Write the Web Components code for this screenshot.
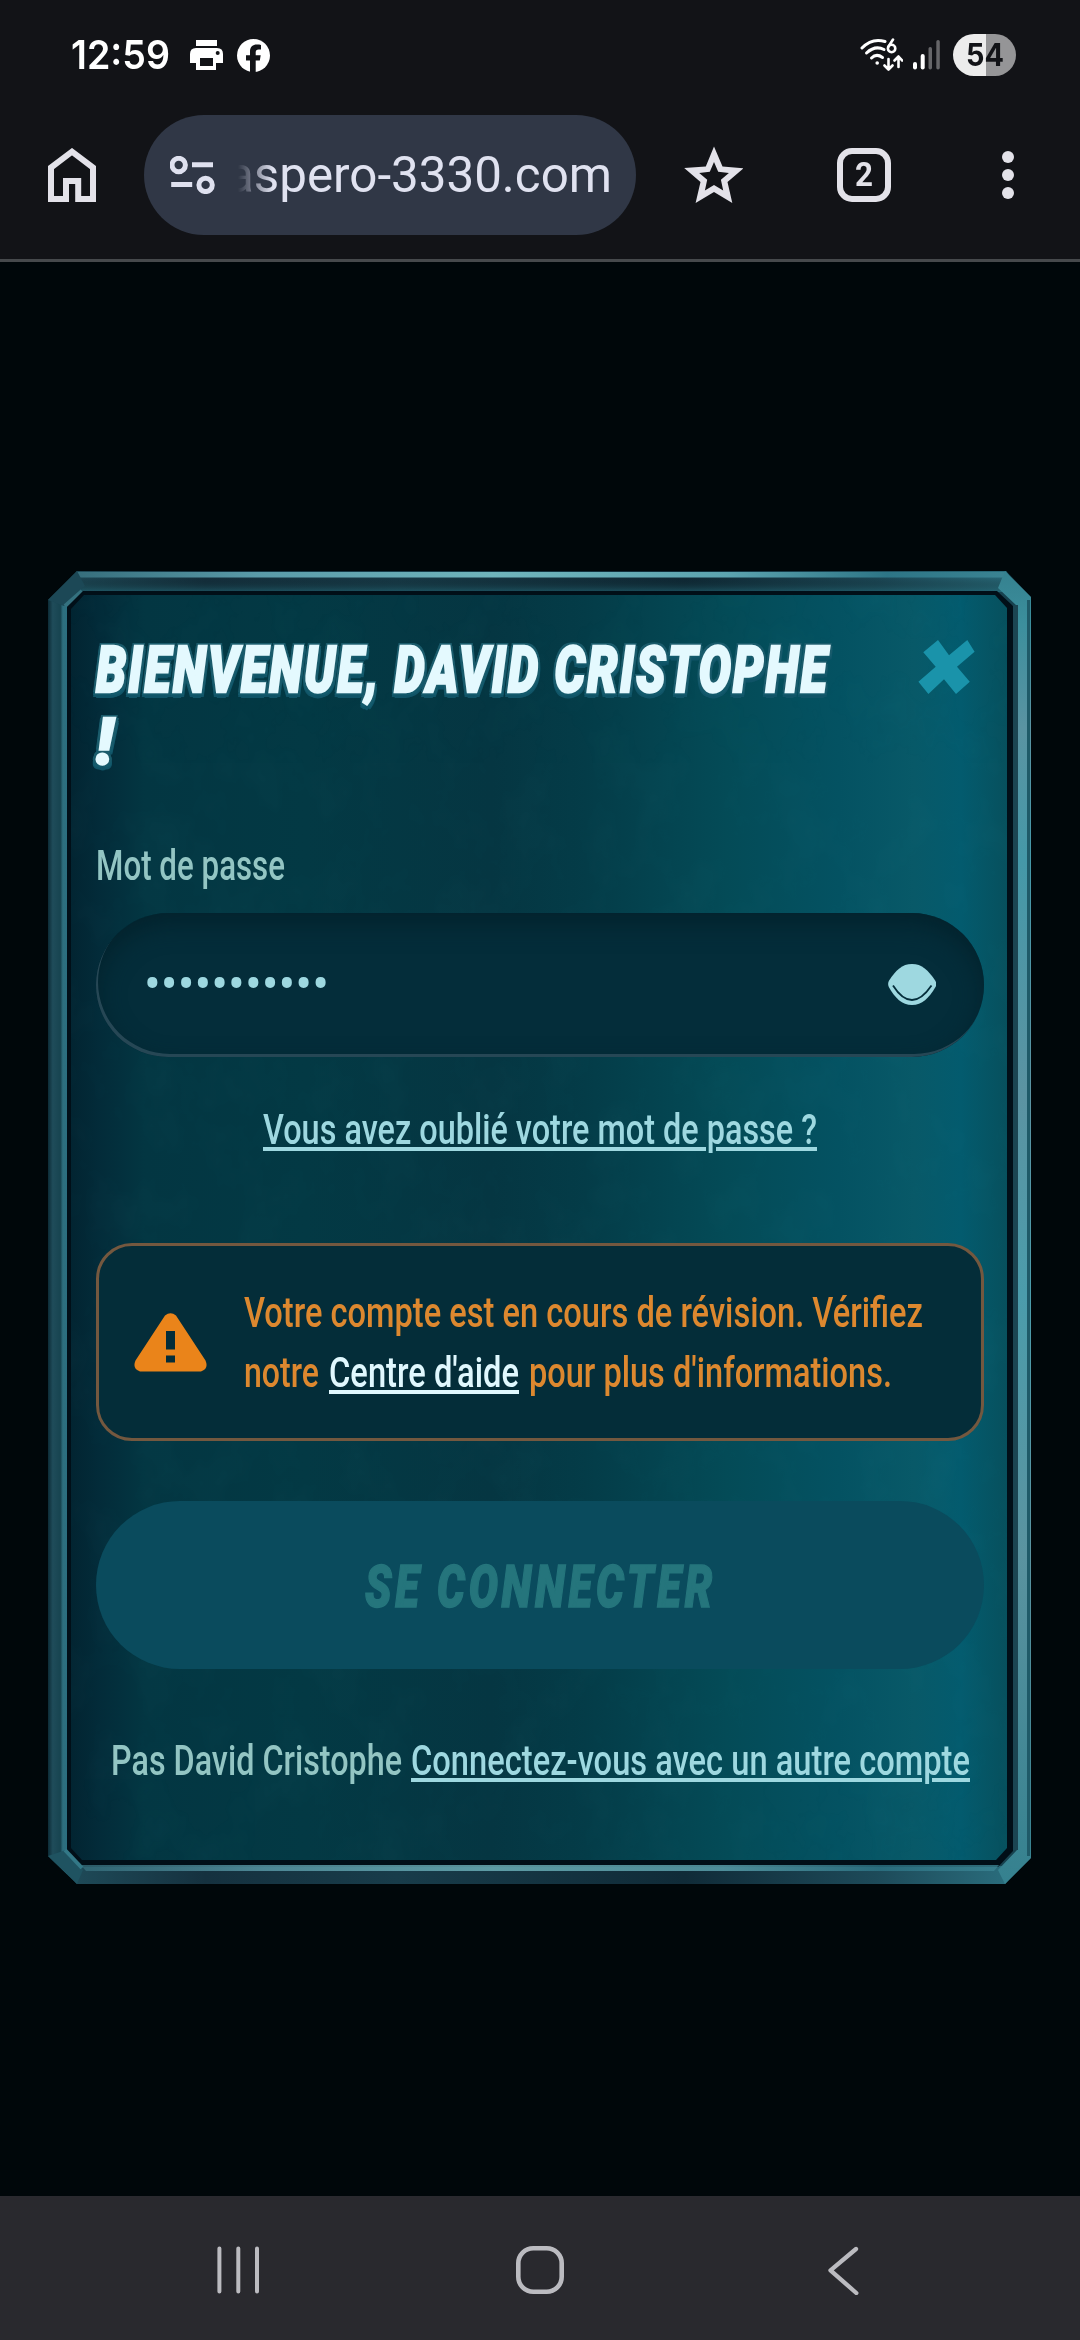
<!DOCTYPE html>
<html lang="fr">
<head>
<meta charset="utf-8">
<title>Connexion</title>
<style>
html,body{margin:0;padding:0;background:#00070a}
body{width:1080px;height:2340px;overflow:hidden;font-family:Roboto,"Liberation Sans",sans-serif}
</style>
</head>
<body>
<phone-screen></phone-screen>
<script>
const define=(name,html,extra)=>customElements.define(name,class extends HTMLElement{
  connectedCallback(){
    if(this.shadowRoot)return;
    const t=document.createElement('template');
    t.innerHTML=html;
    this.attachShadow({mode:'open'}).appendChild(t.content.cloneNode(true));
    if(extra)extra.call(this,this.shadowRoot);
  }
});

/* Text squeezed or stretched horizontally so that it takes exactly w pixels. */
define('fit-text',`<style>
:host{display:block;white-space:nowrap;flex:none}
span{display:inline-block;transform-origin:0 50%;white-space:pre}
</style><span><slot></slot></span>`,function(r){
  const s=r.querySelector('span'),w=+this.getAttribute('w');
  this.style.width=w+'px';
  s.style.transform='scaleX('+(w/s.getBoundingClientRect().width)+')';
});

define('status-bar',`<style>
:host{display:flex;align-items:center;height:110px;box-sizing:border-box;padding:0 64px 0 71px;color:#fff;font-family:Inter,sans-serif}
svg{display:block;flex:none}
.time{font-size:40px;font-weight:600;line-height:110px;margin-right:20px}
.gap{flex:1}
.bat{display:flex;align-items:center;justify-content:center;width:63px;height:42px;border-radius:21px;margin-left:12px;background:linear-gradient(90deg,#ececec 33px,#959597 33px);color:#121317;font-size:31px;font-weight:700;line-height:42px}
</style>
<fit-text class="time" w="99">12:59</fit-text>
<svg width="33" height="32" viewBox="190 40 33 32"><path fill="#fff" d="M196 41h21v6h-21zM196 49h21q6 0 6 6v9h-7v7h-20v-7h-6v-9q0-6 6-6z"/><path fill="#121317" d="M200 59h13v8h-13z"/><circle cx="217.700" cy="54" r="2" fill="#121317"/></svg>
<svg style="margin-left:14px" width="33" height="33" viewBox="0 0 33 33"><circle cx="16.500" cy="16.500" r="16.500" fill="#fff"/><path d="M13 33V21.500H9v-5.300h4v-3.700c0-4.500 2.700-7 7-7 1.500 0 3 .2 4 .4v4.600h-2.300c-2.200 0-3 1.300-3 2.800v2.900h5l-.9 5.300h-4.100V33z" fill="#121317"/></svg>
<div class="gap"></div>
<svg width="44" height="34" viewBox="860 39 44 34" fill="none" stroke="#fff" stroke-width="3" stroke-linecap="round" stroke-linejoin="round"><path d="M863 49Q873 38.500 886 42.500"/><path d="M867.500 54Q876 46 885 50.500"/><path d="M872.500 59Q877.500 54 883.500 58.500"/><circle cx="878.200" cy="64" r="1.800" fill="#fff" stroke="none"/><circle cx="892.600" cy="49.500" r="3.700" stroke-width="2.600"/><path d="M889.500 47.500L894 40.500" stroke-width="2.600"/><path d="M889.500 60v10M885.500 66.500l4 4 4-4M899.500 68v-10M895.500 61.500l4-4 3.600 4" stroke-width="2.600"/></svg>
<svg style="margin-left:10px" width="28" height="30" viewBox="914 40 28 30"><rect x="914" y="62" width="4" height="7.500" rx="2" fill="#fff"/><rect x="921.700" y="54" width="4" height="15.500" rx="2" fill="#fff"/><rect x="929.500" y="47" width="3.500" height="22.500" rx="1.700" fill="#666669"/><rect x="937.300" y="40" width="3.500" height="29.500" rx="1.700" fill="#666669"/></svg>
<div class="bat"><fit-text w="38">54</fit-text></div>`);

define('browser-bar',`<style>
:host{display:flex;align-items:center;height:120px;padding:0 0 0 48px;margin-top:5px}
svg{display:block;flex:none}
.pill{display:flex;flex:none;align-items:center;box-sizing:border-box;width:492px;height:120px;border-radius:60px;background:#303746;margin:0 48px;padding-left:26px}
.url{display:flex;flex:none;justify-content:flex-end;width:397px;font-size:49.500px;line-height:80px;color:#e0e2f0;-webkit-mask-image:linear-gradient(90deg,transparent 23px,#000 58px);mask-image:linear-gradient(90deg,transparent 23px,#000 58px)}
.tabs{display:flex;flex:none;align-items:center;justify-content:center;box-sizing:border-box;width:54px;height:54px;border:6px solid #e3e2e9;border-radius:15px;margin:0 111px 0 94px;color:#e3e2e9;font-size:33px;font-weight:700;line-height:42px}
</style>
<svg width="48" height="54" viewBox="48 148 48 54"><path d="M51 199V167.500L72 151.700L93 167.500V199H78.200V181H66V199Z" fill="none" stroke="#e3e2e9" stroke-width="6"/></svg>
<div class="pill">
<svg width="45" height="38" viewBox="170 156 45 38" fill="none" stroke="#dfe1ef" stroke-width="5"><circle cx="178.700" cy="165" r="6.700"/><path d="M192 164.700h21M171.200 184.600h21"/><circle cx="205.600" cy="184.900" r="6.700"/></svg>
<div class="url"><fit-text w="385">aspero-3330.com</fit-text></div></div>
<svg width="59" height="58" viewBox="684 145 59 58"><path fill="#e3e2e9" fill-rule="evenodd" d="M714 145.500L722.500 165.500L743.500 167.300L727.500 181L732.300 202L714 191L695.600 202L700.500 181L684.200 167L705.800 165.500ZM714 161L709.800 170.800L699.200 172L707.200 178.800L704.900 189.500L714 184L723.200 189.500L720.900 178.800L728.900 172L718.200 170.800Z"/></svg>
<div class="tabs"><fit-text w="18">2</fit-text></div>
<svg width="12" height="50" viewBox="0 0 12 50" fill="#e3e2e9"><circle cx="6" cy="7" r="6"/><circle cx="6" cy="25" r="6"/><circle cx="6" cy="43" r="6"/></svg>`);

/* Beveled metal frame with a textured teal interior. */
define('metal-panel',`<style>
:host{display:grid;width:983px;height:1313px}
svg,.in{grid-area:1/1;display:block}
.in{box-sizing:border-box;padding:61px 47px 0 48px;z-index:1}
</style>
<svg width="983" height="1313" viewBox="48 571 983 1313">
<defs>
<linearGradient id="bg" gradientUnits="userSpaceOnUse" x1="70" x2="1008" y1="0" y2="0"><stop offset="0" stop-color="#022431"/><stop offset=".03" stop-color="#032b39"/><stop offset=".08" stop-color="#033642"/><stop offset=".25" stop-color="#033944"/><stop offset=".45" stop-color="#053642"/><stop offset=".55" stop-color="#043c48"/><stop offset=".7" stop-color="#044b57"/><stop offset=".82" stop-color="#045262"/><stop offset=".9" stop-color="#085968"/><stop offset=".95" stop-color="#035b6e"/><stop offset="1" stop-color="#07505d"/></linearGradient>
<linearGradient id="tp" x1="0" x2="1" y1="0" y2="0"><stop offset="0" stop-color="#356d7b"/><stop offset=".2" stop-color="#5a9ba9"/><stop offset=".45" stop-color="#6fb4bc"/><stop offset=".7" stop-color="#5ca4b0"/><stop offset=".87" stop-color="#2d7586"/><stop offset="1" stop-color="#3b8493"/></linearGradient>
<linearGradient id="st" x1="0" x2="1" y1="0" y2="0"><stop offset="0" stop-color="#1f4c5a"/><stop offset=".15" stop-color="#15313f"/><stop offset=".35" stop-color="#183c4a"/><stop offset=".65" stop-color="#102b38"/><stop offset=".85" stop-color="#1d4a59"/><stop offset="1" stop-color="#2b7080"/></linearGradient>
<linearGradient id="sv" x1="0" x2="0" y1="0" y2="1"><stop offset="0" stop-color="#000" stop-opacity="0"/><stop offset="1" stop-color="#226472" stop-opacity=".65"/></linearGradient>
<linearGradient id="lf" x1="0" x2="1" y1="0" y2="0"><stop offset="0" stop-color="#0c2b36"/><stop offset=".25" stop-color="#1f4c5a"/><stop offset=".65" stop-color="#174450"/><stop offset=".78" stop-color="#2d6e7e"/><stop offset="1" stop-color="#2b6f80"/></linearGradient>
<linearGradient id="rt" x1="0" x2="0" y1="0" y2="1"><stop offset="0" stop-color="#35818f"/><stop offset=".04" stop-color="#3c8f9d"/><stop offset=".12" stop-color="#5a93a2"/><stop offset=".22" stop-color="#4598a8"/><stop offset=".4" stop-color="#5b93a2"/><stop offset=".55" stop-color="#4b9cab"/><stop offset=".75" stop-color="#5a93a0"/><stop offset="1" stop-color="#35818f"/></linearGradient>
<filter id="nz" x="0" y="0" width="1" height="1"><feTurbulence type="fractalNoise" baseFrequency=".022 .016" numOctaves="4" seed="7"/><feColorMatrix values="0 0 0 0 .1  0 0 0 0 .5  0 0 0 0 .55  .9 0 0 0 -.38"/></filter>
<clipPath id="ci"><path d="M84 595H995L1007 608V1848L996 1860H82L71 1848V609Z"/></clipPath>
</defs>
<path d="M77 571H1006L1031 597V1858L1005 1884H77L48 1856V600Z" fill="#17424f"/>
<path d="M77 571H1006L1020 592H62Z" fill="url(#st)"/>
<path d="M75 577H1010V592H75Z" fill="url(#sv)"/>
<path d="M77 572H1005L1009 577.500H71Z" fill="url(#tp)"/>
<path d="M48 600L67 582V1874L48 1856Z" fill="url(#lf)"/>
<path d="M62 1866H1020L1005 1884H77Z" fill="url(#st)"/>
<path d="M48 600L77 571L85 586L64 606Z" fill="#1c4856"/>
<path d="M65 606L82 591" stroke="#34717f" stroke-width="4"/>
<path d="M48 1856L77 1884L83 1870L66 1850Z" fill="#1f5361"/>
<path d="M1005 571L1031 597V1858L1005 1884L998 1870L1017 1850V606L998 588Z" fill="url(#rt)"/>
<path d="M1012 605H1018V1850H1012Z" fill="#1b4552"/>
<path d="M1028.500 600V1856" stroke="#1f5a68" stroke-width="3"/>
<path d="M83 591H997L1013 606V1851L998 1867H81L67 1852V607Z" fill="#010f18"/>
<path d="M81 1865H999L994 1871H86Z" fill="url(#tp)" opacity=".8"/>
<path d="M65 1850L82 1868" stroke="#337887" stroke-width="4"/>
<path d="M84 595H995L1007 608V1848L996 1860H82L71 1848V609Z" fill="url(#bg)"/>
<g clip-path="url(#ci)"><rect x="71" y="595" width="936" height="1265" filter="url(#nz)" opacity=".07"/></g>
</svg>
<div class="in"><slot></slot></div>`);

define('welcome-head',`<style>
:host{display:flex;justify-content:space-between;height:144px}
.t{padding-top:2px;font-size:65px;line-height:72px;font-weight:900;font-style:italic;color:#e4f9fe;-webkit-text-stroke:2.500px #e4f9fe;letter-spacing:3px;text-shadow:-4px 0 #1a5b6b,4px 0 #1a5b6b,0 -3px #1a5b6b,-3px -3px #1a5b6b,3px -3px #1a5b6b,-4px 3px #135a6c,4px 3px #135a6c,-4px 5px #105467,4px 5px #105467,0 6px #105467}
svg{display:block;margin:7px 9px 0 0}
</style>
<div class="t"><fit-text w="733">BIENVENUE, DAVID CRISTOPHE</fit-text><fit-text w="20">!</fit-text></div>
<svg width="57" height="56" viewBox="918 639 57 56"><path fill="#1a93aa" d="M938 640L949 655.300L967.300 640L974.600 651.700L957 666.700L969.800 681.700L956 694L944 679.300L928.400 694L918.400 681.700L935.700 666.700L923.300 652.300Z"/></svg>`);

define('password-field',`<style>
:host{display:block;margin-top:65px}
.l{font-size:42px;font-weight:500;line-height:50px;color:#93c5c3}
.f{display:flex;align-items:center;justify-content:space-between;box-sizing:border-box;width:888px;height:144px;margin-top:22px;padding:0 48px 1px 48px;border-radius:72px;background:#042d3a;box-shadow:inset 2px -3px 0 #264755,inset 0 10px 26px #03222c;color:#9ed8e0}
.d{font-size:52px;line-height:60px}
</style>
<fit-text class="l" w="189">Mot de passe</fit-text>
<div class="f"><fit-text class="d" w="185">•••••••••••</fit-text>
<svg width="48" height="42" viewBox="0 0 48 42"><path fill="#9ed8e0" d="M24 0C34 0 40 6 47.500 17Q49 20 47.500 23C41 34 34 41 24 41S7 34 .8 23Q-.5 20 .8 17C8 6 14 0 24 0Z"/><path d="M5 21.500C11 31 17 36 24 36S37 31 43.500 21.500" fill="none" stroke="#042d3a" stroke-width="1.800"/></svg></div>`);

define('forgot-link',`<style>
:host{display:flex;justify-content:center;margin-top:48px;width:888px;font-size:42px;font-weight:500;line-height:50px;color:#9ed8e0}
a{text-decoration:underline;text-decoration-thickness:4px;text-underline-offset:3px}
</style><fit-text w="554"><a>Vous avez oublié votre mot de passe ?</a></fit-text>`);

define('review-alert',`<style>
:host{display:flex;align-items:center;box-sizing:border-box;width:888px;height:198px;margin-top:88px;border:3px solid #74583f;border-radius:36px;background:#042d39;color:#dd882f;font-size:42px;font-weight:500;line-height:60px;padding-left:35px}
svg{display:block;margin-right:37px;flex:none}
.c{padding-top:2px}
.r{display:flex;gap:10px}
a{color:#e0f8fe;text-decoration:underline;text-decoration-thickness:4px;text-underline-offset:3px;text-decoration-skip-ink:none}
</style>
<svg width="73" height="59" viewBox="0 0 73 59"><path fill="#ea841a" fill-rule="evenodd" d="M31 2.500Q36.500-2 42 2.500L71.500 47.500Q75 56 67 58.500H6Q-2 56 1.500 47.500ZM32 18V36.500H41V18ZM32 42.500V49.500H41V42.500Z"/></svg>
<div class="c"><fit-text w="679">Votre compte est en cours de révision. Vérifiez</fit-text>
<div class="r"><fit-text w="75">notre</fit-text><fit-text w="190"><a>Centre d'aide</a></fit-text><fit-text w="363">pour plus d'informations.</fit-text></div></div>`);

define('login-button',`<style>
:host{display:flex;align-items:center;justify-content:center;box-sizing:border-box;width:888px;height:168px;padding-top:4px;margin-top:60px;border-radius:84px;background:#0a4b5d;color:#25757c;-webkit-text-stroke:1.500px #25757c;font-size:59px;font-weight:900;font-style:italic;line-height:72px;letter-spacing:5px}
</style><fit-text w="351"><slot></slot></fit-text>`);

define('switch-account',`<style>
:host{display:flex;justify-content:center;gap:9px;width:888px;margin-top:67px;font-size:42px;font-weight:500;line-height:50px;color:#93c5c3}
a{color:#9ed8e0;text-decoration:underline;text-decoration-thickness:4px;text-underline-offset:3px}
</style><fit-text w="291">Pas David Cristophe</fit-text><fit-text w="559"><a>Connectez-vous avec un autre compte</a></fit-text>`);

define('nav-bar',`<style>
:host{display:flex;align-items:center;box-sizing:border-box;height:144px;background:#29292e;padding:4px 0 0 217px}
svg{display:block;flex:none}
</style>
<svg width="43" height="48" viewBox="217 2247 43 48" stroke="#bbbbc0" stroke-width="4" stroke-linecap="round"><path d="M219.400 2249.500v43M238.300 2249.500v43M257 2249.500v43"/></svg>
<svg style="margin:0 264px 0 256px" width="48" height="48" viewBox="0 0 48 48"><rect x="2.300" y="2.300" width="43.400" height="43.400" rx="15" fill="none" stroke="#bbbbc0" stroke-width="4.600"/></svg>
<svg width="31" height="49" viewBox="828 2246 31 49" fill="none" stroke="#bbbbc0" stroke-width="4.300" stroke-linecap="round" stroke-linejoin="round"><path d="M856 2249L830.500 2270.300L856.300 2293"/></svg>`);

define('phone-screen',`<style>
:host{display:flex;flex-direction:column;width:1080px;height:2340px;background:#00070a}
header{box-sizing:border-box;height:262px;background:#121317;border-bottom:3px solid #46494c}
main{flex:1;padding:309px 0 0 48px}
</style>
<header><status-bar></status-bar><browser-bar></browser-bar></header>
<main><metal-panel><welcome-head></welcome-head><password-field></password-field><forgot-link></forgot-link><review-alert></review-alert><login-button>SE CONNECTER</login-button><switch-account></switch-account></metal-panel></main>
<nav-bar></nav-bar>`);
</script>
</body>
</html>
